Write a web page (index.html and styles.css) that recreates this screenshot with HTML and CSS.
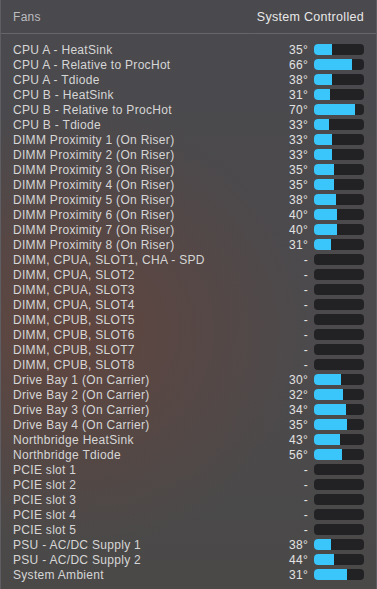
FILE: index.html
```html
<!DOCTYPE html>
<html lang="en">
<head>
<meta charset="UTF-8">
<meta name="viewport" content="width=device-width, initial-scale=1.0">
<title>Fans</title>
<link rel="stylesheet" href="styles.css">
</head>
<body>
<div class="panel">
<div class="panel-header">
<span class="title">Fans</span>
<span class="mode">System Controlled</span>
</div>
<ul class="sensors">
<li class="sensor"><span class="name">CPU A - HeatSink</span><span class="temp">35°</span><span class="bar"><span class="fill" style="width:18px"></span></span></li>
<li class="sensor"><span class="name">CPU A - Relative to ProcHot</span><span class="temp">66°</span><span class="bar"><span class="fill" style="width:38px"></span></span></li>
<li class="sensor"><span class="name">CPU A - Tdiode</span><span class="temp">38°</span><span class="bar"><span class="fill" style="width:18px"></span></span></li>
<li class="sensor"><span class="name">CPU B - HeatSink</span><span class="temp">31°</span><span class="bar"><span class="fill" style="width:16px"></span></span></li>
<li class="sensor"><span class="name">CPU B - Relative to ProcHot</span><span class="temp">70°</span><span class="bar"><span class="fill" style="width:41px"></span></span></li>
<li class="sensor"><span class="name">CPU B - Tdiode</span><span class="temp">33°</span><span class="bar"><span class="fill" style="width:15px"></span></span></li>
<li class="sensor"><span class="name">DIMM Proximity 1 (On Riser)</span><span class="temp">33°</span><span class="bar"><span class="fill" style="width:18px"></span></span></li>
<li class="sensor"><span class="name">DIMM Proximity 2 (On Riser)</span><span class="temp">33°</span><span class="bar"><span class="fill" style="width:18px"></span></span></li>
<li class="sensor"><span class="name">DIMM Proximity 3 (On Riser)</span><span class="temp">35°</span><span class="bar"><span class="fill" style="width:20px"></span></span></li>
<li class="sensor"><span class="name">DIMM Proximity 4 (On Riser)</span><span class="temp">35°</span><span class="bar"><span class="fill" style="width:20px"></span></span></li>
<li class="sensor"><span class="name">DIMM Proximity 5 (On Riser)</span><span class="temp">38°</span><span class="bar"><span class="fill" style="width:22px"></span></span></li>
<li class="sensor"><span class="name">DIMM Proximity 6 (On Riser)</span><span class="temp">40°</span><span class="bar"><span class="fill" style="width:23px"></span></span></li>
<li class="sensor"><span class="name">DIMM Proximity 7 (On Riser)</span><span class="temp">40°</span><span class="bar"><span class="fill" style="width:23px"></span></span></li>
<li class="sensor"><span class="name">DIMM Proximity 8 (On Riser)</span><span class="temp">31°</span><span class="bar"><span class="fill" style="width:17px"></span></span></li>
<li class="sensor"><span class="name">DIMM, CPUA, SLOT1, CHA - SPD</span><span class="temp">-</span><span class="bar"></span></li>
<li class="sensor"><span class="name">DIMM, CPUA, SLOT2</span><span class="temp">-</span><span class="bar"></span></li>
<li class="sensor"><span class="name">DIMM, CPUA, SLOT3</span><span class="temp">-</span><span class="bar"></span></li>
<li class="sensor"><span class="name">DIMM, CPUA, SLOT4</span><span class="temp">-</span><span class="bar"></span></li>
<li class="sensor"><span class="name">DIMM, CPUB, SLOT5</span><span class="temp">-</span><span class="bar"></span></li>
<li class="sensor"><span class="name">DIMM, CPUB, SLOT6</span><span class="temp">-</span><span class="bar"></span></li>
<li class="sensor"><span class="name">DIMM, CPUB, SLOT7</span><span class="temp">-</span><span class="bar"></span></li>
<li class="sensor"><span class="name">DIMM, CPUB, SLOT8</span><span class="temp">-</span><span class="bar"></span></li>
<li class="sensor"><span class="name">Drive Bay 1 (On Carrier)</span><span class="temp">30°</span><span class="bar"><span class="fill" style="width:27px"></span></span></li>
<li class="sensor"><span class="name">Drive Bay 2 (On Carrier)</span><span class="temp">32°</span><span class="bar"><span class="fill" style="width:29px"></span></span></li>
<li class="sensor"><span class="name">Drive Bay 3 (On Carrier)</span><span class="temp">34°</span><span class="bar"><span class="fill" style="width:32px"></span></span></li>
<li class="sensor"><span class="name">Drive Bay 4 (On Carrier)</span><span class="temp">35°</span><span class="bar"><span class="fill" style="width:33px"></span></span></li>
<li class="sensor"><span class="name">Northbridge HeatSink</span><span class="temp">43°</span><span class="bar"><span class="fill" style="width:26px"></span></span></li>
<li class="sensor"><span class="name">Northbridge Tdiode</span><span class="temp">56°</span><span class="bar"><span class="fill" style="width:28px"></span></span></li>
<li class="sensor"><span class="name">PCIE slot 1</span><span class="temp">-</span><span class="bar"></span></li>
<li class="sensor"><span class="name">PCIE slot 2</span><span class="temp">-</span><span class="bar"></span></li>
<li class="sensor"><span class="name">PCIE slot 3</span><span class="temp">-</span><span class="bar"></span></li>
<li class="sensor"><span class="name">PCIE slot 4</span><span class="temp">-</span><span class="bar"></span></li>
<li class="sensor"><span class="name">PCIE slot 5</span><span class="temp">-</span><span class="bar"></span></li>
<li class="sensor"><span class="name">PSU - AC/DC Supply 1</span><span class="temp">38°</span><span class="bar"><span class="fill" style="width:17px"></span></span></li>
<li class="sensor"><span class="name">PSU - AC/DC Supply 2</span><span class="temp">44°</span><span class="bar"><span class="fill" style="width:20px"></span></span></li>
<li class="sensor"><span class="name">System Ambient</span><span class="temp">31°</span><span class="bar"><span class="fill" style="width:33px"></span></span></li>
</ul>
</div>
</body>
</html>
```

FILE: styles.css
```css
html, body {
margin: 0;
padding: 0;
}
body {
font-family: "Liberation Sans", Arial, sans-serif;
font-size: 12px;
letter-spacing: 0.3px;
color: #d6d6d6;
background-color: #4a494c;
}
.panel {
width: 377px;
height: 589px;
box-sizing: border-box;
border-left: 1px solid #5e5d61;
border-right: 1px solid #5e5d61;
background:
radial-gradient(ellipse 240px 220px at 70px 330px, rgba(118, 64, 48, 0.5), rgba(118, 64, 48, 0) 100%),
linear-gradient(#4a494d, #4c4a4c 60%, #4a4948);
overflow: hidden;
}
.panel-header {
display: flex;
justify-content: space-between;
align-items: center;
height: 34px;
padding: 0 12px 0 12px;
border-bottom: 1px solid #66656a;
box-sizing: border-box;
}
.title {
color: #bdbcc0;
}
.mode {
font-size: 12.5px;
color: #e8e8e8;
}
.sensors {
list-style: none;
margin: 0;
padding: 8px 12px 0 12px;
}
.sensor {
display: flex;
align-items: center;
height: 15px;
}
.name {
flex: 1;
white-space: nowrap;
}
.temp {
text-align: right;
color: #e2e2e2;
}
.bar {
display: block;
width: 50px;
height: 11px;
margin-left: 6px;
border-radius: 4px;
background-color: #222124;
overflow: hidden;
}
.fill {
display: block;
height: 100%;
background-color: #3ac6fb;
}
```
